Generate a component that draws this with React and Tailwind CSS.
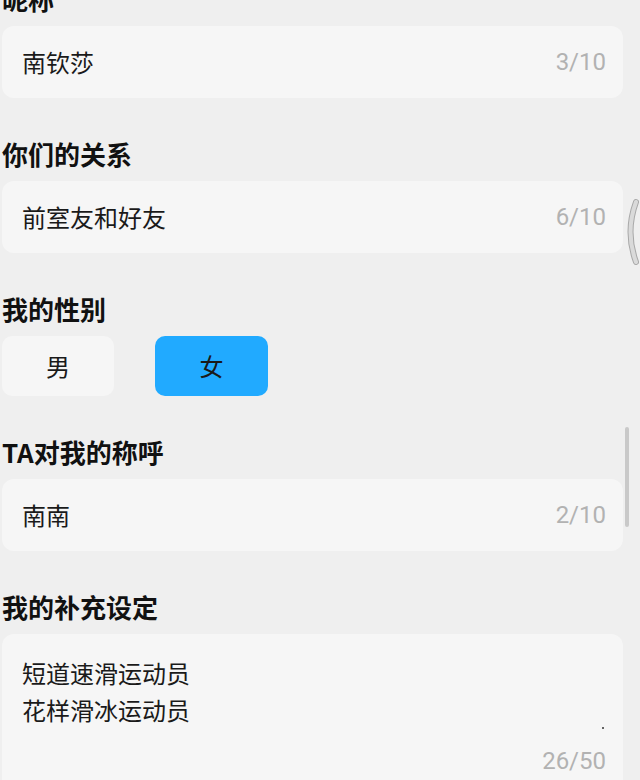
const fields = [
  { label: "你们的关系", value: "前室友和好友", count: "6/10" },
];

function Label({ children, className = "" }) {
  return (
    <div className={"h-8 text-[26px] leading-8 font-bold text-[#111111] " + className}>
      {children}
    </div>
  );
}

function Counter({ children, className = "" }) {
  return (
    <span
      className={"text-[24px] text-[#b2b2b2] " + className}
      style={{ fontFamily: "Roboto, sans-serif" }}
    >
      {children}
    </span>
  );
}

function InputCard({ value, count }) {
  return (
    <div className="mt-[11px] flex h-[72px] items-center justify-between rounded-[12px] bg-[#f6f6f6] pl-5 pr-[17px]">
      <span className="text-[24px] text-[#1a1a1a]">{value}</span>
      <Counter>{count}</Counter>
    </div>
  );
}

export default function App() {
  return (
    <div
      className="relative h-[780px] w-[640px] overflow-hidden bg-[#efefef]"
      style={{ fontFamily: '"Noto Sans CJK SC", "Noto Sans", sans-serif' }}
    >
      <div className="-mt-[17px] w-[623px] pl-[2px]">
        <Label>昵称</Label>
        <InputCard value="南钦莎" count="3/10" />

        {fields.map((f) => (
          <div key={f.label} className="mt-10">
            <Label>{f.label}</Label>
            <InputCard value={f.value} count={f.count} />
          </div>
        ))}

        <div className="mt-10">
          <Label>我的性别</Label>
          <div className="mt-[11px] flex gap-[41px]">
            <button className="flex h-[60px] w-[112px] items-center justify-center rounded-[10px] bg-[#f6f6f6] text-[24px] text-[#1a1a1a]">
              男
            </button>
            <button className="flex h-[60px] w-[113px] items-center justify-center rounded-[10px] bg-[#21aaff] text-[24px] text-[#1a1a1a]">
              女
            </button>
          </div>
        </div>

        <div className="mt-10">
          <Label>TA对我的称呼</Label>
          <InputCard value="南南" count="2/10" />
        </div>

        <div className="mt-10">
          <Label>我的补充设定</Label>
          <div className="relative mt-[11px] h-[200px] rounded-[12px] bg-[#f6f6f6] pl-5 pr-[17px] pt-5">
            <div className="text-[24px] leading-[37px] text-[#1a1a1a]">
              <div>短道速滑运动员</div>
              <div>花样滑冰运动员</div>
            </div>
            <div className="absolute right-[19px] top-[93px] h-[2px] w-[2px] rounded-full bg-[#333333]" />
            <Counter className="absolute right-[17px] top-[109px]">26/50</Counter>
          </div>
        </div>
      </div>

      {/* overscroll edge arc */}
      <svg className="absolute left-[622px] top-[198px]" width="18" height="68" viewBox="0 0 18 68">
        <path d="M14 4 Q3 34 14 64" fill="none" stroke="#a8a8a8" strokeWidth="6" strokeLinecap="round" />
        <path d="M14 4 Q3 34 14 64" fill="none" stroke="#dadada" strokeWidth="4" strokeLinecap="round" />
      </svg>

      {/* scrollbar */}
      <div className="absolute left-[625px] top-[427px] h-[100px] w-[4px] rounded-full bg-[#c9c9c9]" />
    </div>
  );
}
